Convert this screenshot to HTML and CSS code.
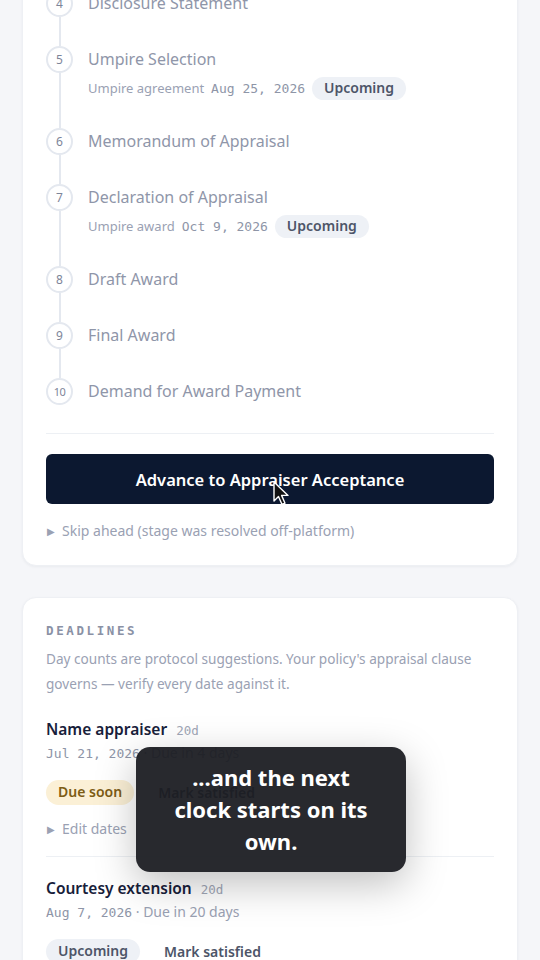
FILE: index.html
```html
<!DOCTYPE html>
<html lang="en">
<head>
    <meta charset="UTF-8">
    <meta name="viewport" content="width=device-width, initial-scale=1.0">
    <title>Appraisal Tracker</title>
    <link rel="stylesheet" href="styles.css">
</head>
<body>
    <main class="page">
        <section class="card stages-card">
            <ol class="stages">
                <li class="stage">
                    <div class="stage-marker"><span class="stage-num">4</span><span class="rail"></span></div>
                    <div class="stage-body"><div class="stage-title">Disclosure Statement</div></div>
                </li>
                <li class="stage">
                    <div class="stage-marker"><span class="stage-num">5</span><span class="rail"></span></div>
                    <div class="stage-body">
                        <div class="stage-title">Umpire Selection</div>
                        <div class="stage-meta">
                            <span>Umpire agreement</span>
                            <span class="mono">Aug 25, 2026</span>
                            <span class="badge badge-upcoming">Upcoming</span>
                        </div>
                    </div>
                </li>
                <li class="stage">
                    <div class="stage-marker"><span class="stage-num">6</span><span class="rail"></span></div>
                    <div class="stage-body"><div class="stage-title">Memorandum of Appraisal</div></div>
                </li>
                <li class="stage">
                    <div class="stage-marker"><span class="stage-num">7</span><span class="rail"></span></div>
                    <div class="stage-body">
                        <div class="stage-title">Declaration of Appraisal</div>
                        <div class="stage-meta">
                            <span>Umpire award</span>
                            <span class="mono">Oct 9, 2026</span>
                            <span class="badge badge-upcoming">Upcoming</span>
                        </div>
                    </div>
                </li>
                <li class="stage">
                    <div class="stage-marker"><span class="stage-num">8</span><span class="rail"></span></div>
                    <div class="stage-body"><div class="stage-title">Draft Award</div></div>
                </li>
                <li class="stage">
                    <div class="stage-marker"><span class="stage-num">9</span><span class="rail"></span></div>
                    <div class="stage-body"><div class="stage-title">Final Award</div></div>
                </li>
                <li class="stage">
                    <div class="stage-marker"><span class="stage-num small">10</span></div>
                    <div class="stage-body"><div class="stage-title">Demand for Award Payment</div></div>
                </li>
            </ol>

            <div class="advance">
                <button class="btn-advance">Advance to Appraiser Acceptance</button>
                <!-- pointer sitting over the button -->
                <svg class="cursor" width="18" height="26" viewBox="0 0 18 26">
                    <path d="M1 1 L1 20 L5.5 15.5 L9 23.5 L12 22.2 L8.6 14.4 L15 14.4 Z" fill="#111" stroke="#fff" stroke-width="1.4" stroke-linejoin="round"/>
                </svg>
            </div>
            <div class="disclosure"><span class="tri">&#9654;</span>Skip ahead (stage was resolved off-platform)</div>
        </section>

        <section class="card deadlines-card">
            <h2 class="eyebrow">DEADLINES</h2>
            <p class="note">Day counts are protocol suggestions. Your policy's appraisal clause governs — verify every date against it.</p>

            <div class="deadline">
                <div class="deadline-head">
                    <span class="deadline-name">Name appraiser</span>
                    <span class="days mono">20d</span>
                </div>
                <div class="deadline-date"><span class="mono">Jul 21, 2026</span> · Due in 4 days</div>
                <div class="deadline-actions">
                    <span class="badge badge-soon">Due soon</span>
                    <span class="link-btn">Mark satisfied</span>
                </div>
                <div class="disclosure"><span class="tri">&#9654;</span>Edit dates</div>
            </div>

            <div class="deadline">
                <div class="deadline-head">
                    <span class="deadline-name">Courtesy extension</span>
                    <span class="days mono">20d</span>
                </div>
                <div class="deadline-date"><span class="mono">Aug 7, 2026</span> · Due in 20 days</div>
                <div class="deadline-actions">
                    <span class="badge badge-upcoming">Upcoming</span>
                    <span class="link-btn">Mark satisfied</span>
                </div>
            </div>

            <div class="toast">...and the next clock starts on its own.</div>
        </section>
    </main>
</body>
</html>
```

FILE: styles.css
```css
body {
    margin: 0;
    background-color: #f5f6f9;
    font-family: "Noto Sans", "Open Sans", sans-serif;
    color: #1a2236;
}

.page {
    padding: 0 22px 40px;
    margin-top: -37px;
}

.mono {
    font-family: "DejaVu Sans Mono", "Liberation Mono", monospace;
}

.card {
    background-color: #fff;
    border-radius: 14px;
    box-shadow: 0 1px 3px rgba(20, 30, 60, 0.05);
    border: 1px solid #eef0f4;
}

.stages-card {
    padding: 26px 23px 24px;
}

/* timeline */
.stages {
    list-style: none;
    margin: 0;
    padding: 0;
}

.stage {
    display: grid;
    grid-template-columns: 27px 1fr;
    column-gap: 15px;
}

.stage-marker {
    display: flex;
    flex-direction: column;
    align-items: center;
}

.stage-num {
    width: 23px;
    height: 23px;
    border: 2px solid #e4e8ef;
    border-radius: 50%;
    font-size: 12px;
    color: #7d8599;
    display: flex;
    align-items: center;
    justify-content: center;
    flex-shrink: 0;
    background: #fff;
}

.stage-num.small {
    font-size: 11px;
    letter-spacing: -0.5px;
}

.rail {
    width: 2px;
    flex: 1;
    background-color: #e4e8ef;
}

.stage-body {
    padding-bottom: 29px;
}

.stage:last-child .stage-body {
    padding-bottom: 28px;
}

.stage-title {
    font-size: 16px;
    line-height: 27px;
    color: #8f96a9;
}

.stage-meta {
    display: flex;
    align-items: center;
    gap: 7px;
    margin-top: 2px;
    margin-bottom: -2px;
    font-size: 13px;
    color: #9aa1b3;
    height: 26px;
}

.stage-meta .mono {
    color: #8e95a7;
    font-size: 13px;
}

.badge {
    display: inline-block;
    padding: 2px 12px 3px;
    border-radius: 13px;
    font-size: 14px;
    font-weight: 600;
    line-height: 20px;
}

.stage-meta .badge {
    padding: 1px 12px 2px;
}

.badge-upcoming {
    background-color: #eef1f6;
    color: #4d5568;
}

.badge-soon {
    background-color: #fbf0d6;
    color: #7d5c14;
}

/* primary action */
.advance {
    position: relative;
    border-top: 1px solid #edf0f4;
    padding-top: 20px;
}

.btn-advance {
    width: 100%;
    height: 50px;
    background-color: #0c1830;
    color: #fff;
    border: none;
    border-radius: 6px;
    font-family: inherit;
    font-size: 16.5px;
    font-weight: 600;
    cursor: pointer;
}

.cursor {
    position: absolute;
    left: 227px;
    top: 47px;
}

.disclosure {
    margin-top: 17px;
    font-size: 14px;
    color: #9aa1b3;
    line-height: 20px;
}

.tri {
    font-size: 10px;
    color: #9aa1b3;
    margin: 0 7px 0 1px;
    vertical-align: 1px;
}

/* deadlines */
.deadlines-card {
    position: relative;
    margin-top: 31px;
    padding: 25px 23px 20px;
}

.eyebrow {
    margin: 0;
    font-family: "DejaVu Sans Mono", monospace;
    font-size: 12.5px;
    font-weight: bold;
    letter-spacing: 2.6px;
    color: #8a91a5;
    line-height: 16px;
}

.note {
    margin: 7px 0 0;
    font-size: 13.6px;
    line-height: 25px;
    color: #9aa1b3;
}

.deadline {
    padding: 22px 0 17px;
}

.deadline + .deadline {
    border-top: 1px solid #edf0f4;
    padding-top: 20px;
}

.deadline-head {
    display: flex;
    align-items: baseline;
    gap: 9px;
}

.deadline-name {
    font-size: 15.5px;
    font-weight: 600;
    color: #17203a;
}

.days {
    font-size: 12.5px;
    color: #a0a6b6;
}

.deadline-date {
    margin-top: 3px;
    font-size: 14px;
    color: #9aa1b3;
}

.deadline-date .mono {
    font-size: 13px;
    color: #8e95a7;
}

.deadline-actions {
    display: flex;
    align-items: center;
    gap: 12px;
    margin-top: 18px;
}

.link-btn {
    font-size: 14px;
    font-weight: 600;
    color: #4d5568;
    padding: 0 12px;
}

.deadline .disclosure {
    margin-top: 14px;
}

/* floating caption */
.toast {
    position: absolute;
    left: 113px;
    top: 149px;
    width: 270px;
    box-sizing: border-box;
    padding: 14px 26px 15px;
    background-color: rgba(27, 28, 33, 0.94);
    border-radius: 14px;
    color: #fff;
    font-size: 22px;
    font-weight: 700;
    line-height: 32px;
    text-align: center;
    box-shadow: 0 12px 40px rgba(0, 0, 0, 0.25);
}
```
